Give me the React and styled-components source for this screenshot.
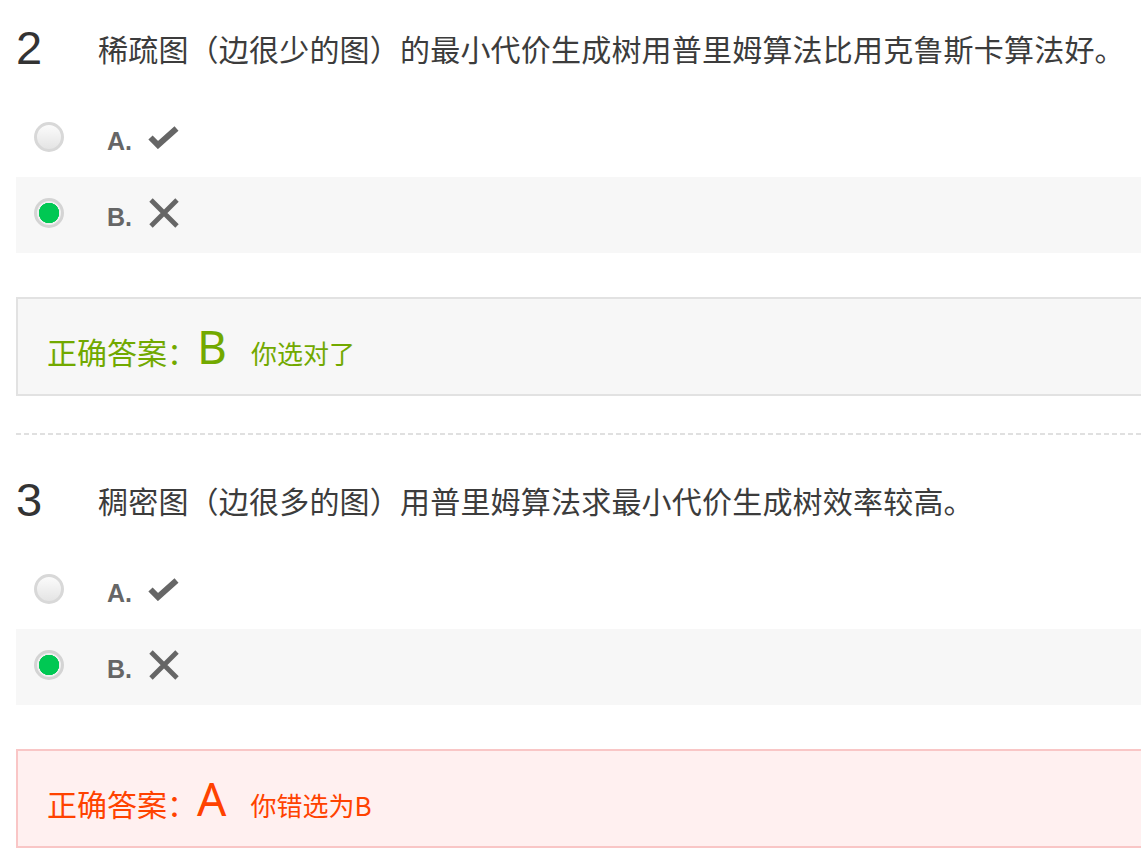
import React from 'react'
import styled, { createGlobalStyle } from 'styled-components'

const Global = createGlobalStyle`
  html, body {
    margin: 0;
    padding: 0;
    background: #fff;
    overflow: hidden;
  }
  body {
    font-family: "Liberation Sans", "Noto Sans CJK SC", sans-serif;
  }
`

const Page = styled.div`
  padding: 28px 0 0 16px;
  width: 1180px;
`

const Question = styled.section`
  & + & {
    margin-top: 45px;
  }
`

const Header = styled.div`
  display: flex;
  align-items: center;
  height: 40px;
  margin-bottom: 2px;
`

const Number = styled.span`
  width: 82px;
  font-family: "Liberation Sans", sans-serif;
  font-size: 47px;
  color: #333;
  line-height: 40px;
`

const Title = styled.h2`
  margin: 0;
  font-family: "Noto Sans CJK SC", sans-serif;
  font-weight: 400;
  font-size: 30px;
  letter-spacing: 0.2px;
  line-height: 40px;
  color: #3c3c3c;
`

const Options = styled.ul`
  list-style: none;
  margin: 33px 0 0;
  padding: 0;
`

const Option = styled.li`
  display: flex;
  align-items: center;
  height: 76px;
  padding-left: 18px;
  background: ${(p) => (p.$selected ? '#f7f7f7' : 'transparent')};
`

const Radio = styled.span`
  box-sizing: border-box;
  width: 30px;
  height: 30px;
  border-radius: 50%;
  margin-top: -4px;
  border: 3px solid ${(p) => (p.$checked ? '#d4d4d4' : '#d8d8d8')};
  background: ${(p) =>
    p.$checked
      ? 'radial-gradient(circle, #00c853 0 10px, #f0f0f0 10.5px)'
      : 'linear-gradient(#fbfbfb, #e4e4e4)'};
`

const Label = styled.span`
  margin-left: 43px;
  padding-top: 4px;
  font-family: "Liberation Sans", sans-serif;
  font-weight: 700;
  font-size: 25px;
  color: #666;
`

const Mark = styled.svg`
  margin-left: 16px;
  margin-top: -4px;
  display: block;
`

const Check = () => (
  <Mark width="31" height="23" viewBox="0 0 31 23">
    <polyline points="2.5,11.5 10,19 28.5,2.5" fill="none" stroke="#666" strokeWidth="6" />
  </Mark>
)

const Cross = () => (
  <Mark width="32" height="32" viewBox="0 0 32 32">
    <path d="M3 3 L29 29 M29 3 L3 29" fill="none" stroke="#666" strokeWidth="4.8" />
  </Mark>
)

const Result = styled.div`
  margin-top: 44px;
  height: 95px;
  display: flex;
  align-items: center;
  padding-left: 29px;
  border: 2px solid ${(p) => (p.$ok ? '#e2e2e2' : '#f9c6c6')};
  background: ${(p) => (p.$ok ? '#f7f7f7' : '#fff0f0')};
  color: ${(p) => (p.$ok ? '#72a900' : '#ff4200')};
`

const ResultLine = styled.div`
  display: flex;
  align-items: baseline;
  padding-top: 2px;
  font-family: "Noto Sans CJK SC", sans-serif;
`

const Caption = styled.span`
  font-size: 30px;
`

const Letter = styled.span`
  font-family: "Noto Sans", "Liberation Sans", sans-serif;
  font-size: 46px;
  line-height: 46px;
`

const Verdict = styled.span`
  font-size: 26px;
  margin-left: 24px;
`

const Divider = styled.hr`
  margin: 37px 0 0;
  border: 0;
  height: 2px;
  background: repeating-linear-gradient(to right, #e0e0e0 0 5px, transparent 5px 8px);
`

const questions = [
  {
    no: 2,
    text: '稀疏图（边很少的图）的最小代价生成树用普里姆算法比用克鲁斯卡算法好。',
    chosen: 'B',
    answer: 'B',
  },
  {
    no: 3,
    text: '稠密图（边很多的图）用普里姆算法求最小代价生成树效率较高。',
    chosen: 'B',
    answer: 'A',
  },
]

const options = [
  { key: 'A', icon: <Check /> },
  { key: 'B', icon: <Cross /> },
]

const App = () => {
  return (
    <>
      <Global />
      <Page>
        {questions.map((q, i) => {
          const ok = q.chosen === q.answer
          return (
            <Question key={q.no}>
              <Header>
                <Number>{q.no}</Number>
                <Title>{q.text}</Title>
              </Header>
              <Options>
                {options.map((o) => (
                  <Option key={o.key} $selected={q.chosen === o.key}>
                    <Radio $checked={q.chosen === o.key} />
                    <Label>{o.key}.</Label>
                    {o.icon}
                  </Option>
                ))}
              </Options>
              <Result $ok={ok}>
                <ResultLine>
                  <Caption>正确答案：</Caption>
                  <Letter>{q.answer}</Letter>
                  <Verdict>{ok ? '你选对了' : `你错选为${q.chosen}`}</Verdict>
                </ResultLine>
              </Result>
              {i < questions.length - 1 && <Divider />}
            </Question>
          )
        })}
      </Page>
    </>
  )
}

export default App
